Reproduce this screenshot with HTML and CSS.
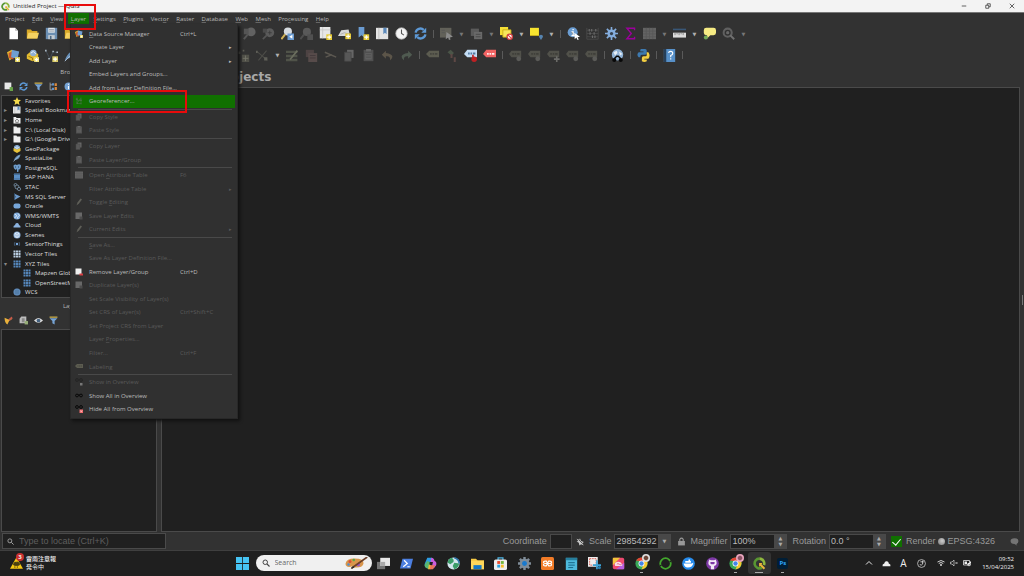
FILE: index.html
```html
<!DOCTYPE html>
<html lang="en">
<head>
<meta charset="utf-8">
<title>Untitled Project — QGIS</title>
<link rel="stylesheet" href="styles.css">
</head>
<body>
<svg class="sprite" aria-hidden="true">
  <symbol id="qgis" viewBox="0 0 16 16"><path d="M8 2a6 6 0 1 0 3 11.200" fill="none" stroke="#589632" stroke-width="3.200"/><path d="M8 2a6 6 0 0 1 5.500 8" fill="none" stroke="#8fb83e" stroke-width="3.200"/><path d="M7.500 7.500h4l-1 1.500 4.500 4.500-1.800 1.800L9 11l-1.500 1z" fill="#e8b53a"/></symbol>
  <symbol id="file" viewBox="0 0 16 16"><path d="M3 1h7l3.500 3.500V15H3z" fill="#fff"/><path d="M10 1v3.500h3.500z" fill="#bbb"/></symbol>
  <symbol id="folder" viewBox="0 0 16 16"><path d="M1 3h5l1.500 2H14v9H1z" fill="#d9a928"/><path d="M3 7h13l-2 7H1z" fill="#f5d262"/></symbol>
  <symbol id="save" viewBox="0 0 16 16"><path d="M1 1h14v14H1z" fill="#6b8fb3"/><path d="M4 1h8v6H4z" fill="#dfe5ea"/><path d="M4 10h8v5H4z" fill="#c3cbd2"/><path d="M5 3h6M5 5h6" stroke="#8b98a5"/><path d="M6 11h2v4H6z" fill="#4c6885"/></symbol>
  <symbol id="sources" viewBox="0 0 16 16"><path d="M0 4l6-3 3 9-6 4z" fill="#e7b62e"/><path d="M2 5l6-3v11l-6-2z" fill="#c85b2f"/><path d="M6 1l9 2-2 9-8-2z" fill="#6f9fd3"/><path d="M10 10h6v6h-6z" fill="#e9d862"/><path d="M13 11v4M11 13h4" stroke="#fff" stroke-width="1.400"/></symbol>
  <symbol id="geopkg-new" viewBox="0 0 16 16"><path d="M1 7l6-5 8 4v7l-7 2-7-3z" fill="#e5bd31"/><circle cx="9" cy="5" r="4" fill="#8fb0d5"/><path d="M6 5l3-2 3 3" stroke="#fff" fill="none"/><path d="M3 9l5 2v3" fill="none" stroke="#8d6d10"/><path d="M10 10h6v6h-6z" fill="#f1e27b"/><path d="M13 11v4M11 13h4" stroke="#fff" stroke-width="1.400"/></symbol>
  <symbol id="shape-new" viewBox="0 0 16 16"><path d="M1 2l5 10 4-9 5 2" fill="none" stroke="#47515c"/><path d="M0 1h2v2H0zM9 2h2v2H9zM14 3h2v2h-2zM4 11h2v2H4z" fill="#a9b8c4"/><path d="M9 9h7v7H9z" fill="#dacb68"/><path d="M12.500 10v5M10 12.500h5" stroke="#fff" stroke-width="1.400"/></symbol>
  <symbol id="feather" viewBox="0 0 16 16"><path d="M1 15C3 7 8 2 15 1c-1 7-5 10-11 11z" fill="#6b94bd"/><path d="M1 15L12 4" stroke="#b6cbe0"/></symbol>
  <symbol id="zoomd" viewBox="0 0 16 16"><circle cx="10" cy="6" r="5.500" fill="#626262"/><path d="M6 9l-5 6" stroke="#565656" stroke-width="2.400"/><path d="M1 2h6v7H1z" fill="#555"/></symbol>
  <symbol id="zoomd2" viewBox="0 0 16 16"><circle cx="9.500" cy="7" r="5.500" fill="#5b5b5b"/><path d="M6 10l-5 5" stroke="#555" stroke-width="2"/><path d="M7 7h5M9.500 4.500v5" stroke="#3b3b3b"/><path d="M1 2h5v5H1z" fill="#4b4b4b"/></symbol>
  <symbol id="zoomlast" viewBox="0 0 16 16"><circle cx="8.500" cy="5.500" r="5" fill="#d6dbe0"/><path d="M5 9l-4.500 6" stroke="#d3b458" stroke-width="2.400"/><path d="M8 8h8v8H8z" fill="#6a9bd1"/><path d="M14 9.500L10 12l4 2.500z" fill="#fff"/></symbol>
  <symbol id="zoomnext" viewBox="0 0 16 16"><circle cx="8.500" cy="6" r="5" fill="#595959"/><path d="M5 9l-4.500 6" stroke="#4d4d4d" stroke-width="2.400"/><path d="M9 9h7v7H9z" fill="#505050"/></symbol>
  <symbol id="layout" viewBox="0 0 16 16"><path d="M1 0h13v14H1z" fill="#e7e7e7"/><path d="M1 3.500h13M4.500 0v14" stroke="#c6c6c6"/><path d="M9 9h7v7H9z" fill="#e6cb35"/><path d="M12.500 10v5M10 12.500h5" stroke="#fff" stroke-width="1.400"/></symbol>
  <symbol id="view3d" viewBox="0 0 16 16"><path d="M0 11l4-7 9-1 2 8z" fill="#d8d8d8"/><path d="M3 9l5-2 6 2" stroke="#aaa" fill="none"/><path d="M9 8h7v7H9z" fill="#e6cb35"/><path d="M12.500 9v5M10 11.500h5" stroke="#fff" stroke-width="1.400"/></symbol>
  <symbol id="bookmarknew" viewBox="0 0 16 16"><path d="M2 0h7v13l-3.500-3L2 13z" fill="#6a9bd1"/><path d="M8 9h7v7H8z" fill="#e6cb35"/><path d="M11.500 10v5M9 12.500h5" stroke="#fff" stroke-width="1.400"/></symbol>
  <symbol id="bookmarks" viewBox="0 0 16 16"><path d="M0 1h15v14H0z" fill="#e4e4e4"/><path d="M3.500 1v14" stroke="#bbb"/><path d="M9 1h4v8l-2-2-2 2z" fill="#5c8abc"/></symbol>
  <symbol id="clock" viewBox="0 0 16 16"><circle cx="8" cy="8" r="7" fill="#f4f4f4" stroke="#b9b9b9"/><path d="M8 3v5l3 2" fill="none" stroke="#555" stroke-width="1.300"/></symbol>
  <symbol id="refresh" viewBox="0 0 16 16"><path d="M2 7a6 6 0 0 1 10-3.500M14 9a6 6 0 0 1-10 3.500" fill="none" stroke="#5d99d6" stroke-width="2.800"/><path d="M15 1v6H9zM1 15V9h6z" fill="#5d99d6"/></symbol>
  <symbol id="selectd" viewBox="0 0 16 16"><path d="M0 1h14v12H0z" fill="#626159"/><path d="M2 4h4M2 7h4" stroke="#555"/><path d="M8 6l8 6-4 .5 1 3-2 .5-1-3-3 2z" fill="#8b8b8b"/></symbol>
  <symbol id="stackd" viewBox="0 0 16 16"><path d="M1 2h10v9H1z" fill="#5b5b5b"/><path d="M5 6h10v9H5z" fill="#696969"/><path d="M7 9h6M7 12h6" stroke="#444"/></symbol>
  <symbol id="deselect" viewBox="0 0 16 16"><path d="M0 0h10v10H0z" fill="#f6df34"/><path d="M3.500 3.500h10v9h-10z" fill="#f9e85b" stroke="#c4a815"/><circle cx="12" cy="12" r="3.300" fill="#fff" stroke="#d33f42" stroke-width="1.600"/><path d="M10 10l4 4" stroke="#d33f42" stroke-width="1.400"/></symbol>
  <symbol id="selloc" viewBox="0 0 16 16"><path d="M0 1h11v10H0z" fill="#f8e42f"/><path d="M0 10.500h11" stroke="#b8a11b"/><path d="M13.500 16l-2.500-4a2.500 2.500 0 1 1 5 0z" fill="#5683ae"/></symbol>
  <symbol id="identify" viewBox="0 0 16 16"><circle cx="7" cy="6.500" r="6.200" fill="#6b9dd2"/><path d="M7.500 2.500v1.500M5.500 6h2v4M5.500 10.500h4" stroke="#fff" stroke-width="1.600"/><path d="M9 7l7 5-3 .5 1.500 3-1.500.5-1.500-3-2 2z" fill="#fff"/></symbol>
  <symbol id="abacus" viewBox="0 0 16 16"><path d="M1 1v14M15 1v14M1 4h14M1 8h14M1 12h14M1 15h14" stroke="#4c4c4c"/><path d="M4 2.500v3M7 2.500v3M10 6.500v3M5 6.500v3M8 10.500v3M11 10.500v3M12 2.500v3" stroke="#6c6c6c" stroke-width="1.400"/></symbol>
  <symbol id="gear" viewBox="0 0 16 16"><path d="M8 0v16M0 8h16M2.300 2.300l11.400 11.400M13.700 2.300L2.300 13.700" stroke="#84addd" stroke-width="2"/><circle cx="8" cy="8" r="5" fill="#84addd"/><circle cx="8" cy="8" r="2" fill="#34404e"/></symbol>
  <symbol id="sigma" viewBox="0 0 16 16"><path d="M13 4V1.500H3.500L9 8l-5.500 6.500H13V12" fill="none" stroke="#9b009b" stroke-width="1.700"/></symbol>
  <symbol id="tabled" viewBox="0 0 16 16"><path d="M0 1h16v14H0z" fill="#636363"/><path d="M0 5h16M0 8.500h16M0 12h16M4 1v14M8 1v14M12 1v14" stroke="#585858"/></symbol>
  <symbol id="ruler" viewBox="0 0 16 16"><path d="M0 3h16" stroke="#395777" stroke-width="2"/><path d="M0 7h16v6H0z" fill="#dcdcdc"/><path d="M2.500 7v3M5 7v2M7.500 7v3M10 7v2M12.500 7v3" stroke="#777"/></symbol>
  <symbol id="tip" viewBox="0 0 16 16"><path d="M4 1h9q3 0 3 3v3q0 3-3 3H9l-4 4v-4H4Q1 10 1 7V4q0-3 3-3z" fill="#f6eb83"/><circle cx="3.500" cy="13" r="2.500" fill="#72aa57"/></symbol>
  <symbol id="runact" viewBox="0 0 16 16"><circle cx="7" cy="7" r="5" fill="none" stroke="#606060" stroke-width="2.500"/><circle cx="7" cy="7" r="2" fill="#686868"/><path d="M10 10l5 5" stroke="#707070" stroke-width="2.400" fill="none"/></symbol>
  <symbol id="pencild" viewBox="0 0 16 16"><path d="M3 15l2-6 6-8 3 2-6 8z" fill="#5f5f58"/></symbol>
  <symbol id="noded" viewBox="0 0 16 16"><path d="M1 3h3v3H1zM7 1h2v2H7z" fill="#5d5d55"/><path d="M6 7h9v9H6z" fill="#515149"/><path d="M10.500 8v7M7 11.500h7" stroke="#77776b"/></symbol>
  <symbol id="vertexd" viewBox="0 0 16 16"><path d="M1 3l13 11M13 2L3 14" stroke="#4d4d48" stroke-width="1.300"/><path d="M0 2h2v3H0zM10 10h4v4h-4z" fill="#5e5e57"/></symbol>
  <symbol id="attrd" viewBox="0 0 16 16"><path d="M0 2h14v3H0zM0 7h14v3H0zM0 12h14v3H0z" fill="#505349"/><path d="M5 13L14 2" stroke="#6c6f5f" stroke-width="2"/></symbol>
  <symbol id="deld" viewBox="0 0 16 16"><path d="M1 1h10v9H1z" fill="#4d4343"/><path d="M4 5h11v11H4z" fill="#574b4a"/><path d="M6 8h7M6 11h7" stroke="#41383a"/></symbol>
  <symbol id="cutd" viewBox="0 0 16 16"><path d="M1 4l14 6M2 10l8-3" stroke="#5c5851" stroke-width="1.800"/></symbol>
  <symbol id="copyd" viewBox="0 0 16 16"><path d="M5 1h8v10H5z" fill="#666"/><path d="M2 4h8v11H2z" fill="#585858" stroke="#484848"/></symbol>
  <symbol id="pasted" viewBox="0 0 16 16"><path d="M2 1h12v14H2z" fill="#505050"/><path d="M5 0h6v3H5z" fill="#666"/><path d="M4 5h8v8H4z" fill="#606060"/><path d="M5 7h6M5 10h6" stroke="#4c4c4c"/></symbol>
  <symbol id="undod" viewBox="0 0 16 16"><path d="M6 2L1 7l5 5V9q6-1 5 5 8-7-5-9z" fill="#5c5549"/></symbol>
  <symbol id="redod" viewBox="0 0 16 16"><path d="M10 2l5 5-5 5V9q-6-1-5 5-8-7 5-9z" fill="#4f5a50"/></symbol>
  <symbol id="tagd" viewBox="0 0 16 16"><path d="M0 6l4-4h12v8H4z" fill="#5c5c50"/><path d="M5 6h2M8 6h2M11 6h3" stroke="#45453f" stroke-width="2"/></symbol>
  <symbol id="tagd2" viewBox="0 0 16 16"><path d="M0 6l3-4h12v8H3z" fill="#51514a"/><path d="M4 6h2M7 6h2M10 6h3" stroke="#3f3f3a" stroke-width="2"/><circle cx="12" cy="12" r="3" fill="#5b5b58"/></symbol>
  <symbol id="tagd3" viewBox="0 0 16 16"><path d="M0 6l3-4h12v8H3z" fill="#51514a"/><path d="M4 6h2M7 6h2M10 6h3" stroke="#3f3f3a" stroke-width="2"/><path d="M12 9v7M8.500 12.500h7" stroke="#6b6b68" stroke-width="2"/></symbol>
  <symbol id="diagd" viewBox="0 0 16 16"><path d="M3 4l4-3 4 4-3 3z" fill="#4b5548"/><path d="M8 6v5M12 10v6" stroke="#5e4845" stroke-width="2.500"/></symbol>
  <symbol id="tagblue" viewBox="0 0 16 16"><path d="M0 6l4-5h12v9H4z" fill="#c4ddf5"/><path d="M5 5.500h2M8 5.500h2M11 5.500h3" stroke="#527ba3" stroke-width="2.400"/><circle cx="12.500" cy="12.500" r="3.400" fill="#bd2023"/><path d="M11 10V7" stroke="#bd2023" stroke-width="2"/></symbol>
  <symbol id="tagred" viewBox="0 0 16 16"><path d="M0 6l4-5h12v9H4z" fill="#f26464"/><path d="M5 6h2M8 6h2M11 6h3" stroke="#fff0f0" stroke-width="2.400"/></symbol>
  <symbol id="metasearch" viewBox="0 0 16 16"><circle cx="8" cy="7" r="7" fill="#91b3d6"/><path d="M3 4l4-2 1 3-3 3zM10 3l4 3-3 2z" fill="#e7eff7"/><path d="M4 12l3-3h2l3 3" fill="none" stroke="#050505" stroke-width="1.800"/><circle cx="4" cy="13.500" r="2.500" fill="#080808"/><circle cx="12" cy="13.500" r="2.500" fill="#080808"/></symbol>
  <symbol id="python" viewBox="0 0 16 16"><path d="M5 0h5q2 0 2 2v3q0 2-2 2H6q-2 0-2 3H2Q-1 7 2 4h6V3H4V1z" fill="#3e7ab0"/><path d="M12 4h2q3 4 0 8H9v1h3v2q-3 2-6 0v-4q0-2 2-2h3q1 0 1-2z" fill="#f4cf42"/></symbol>
  <symbol id="help" viewBox="0 0 16 16"><path d="M1 0h14v16H1z" fill="#5790c8"/><path d="M1 0h3v16H1z" fill="#263f59"/><path d="M7 5q0-2 2.500-2T12 5.500Q12 7 9.500 8v2M9.500 11.500V13" stroke="#fff" fill="none" stroke-width="1.400"/></symbol>
  <symbol id="addlayer" viewBox="0 0 16 16"><path d="M1 1h12v12H1z" fill="#e7e7e7"/><path d="M10 9h6v7h-6z" fill="#67a247"/></symbol>
  <symbol id="funnel" viewBox="0 0 16 16"><path d="M1 1h14v2H1z" fill="#e2c14e"/><path d="M1 4h14l-5 5v6l-4-2V9z" fill="#76a3d4"/></symbol>
  <symbol id="collapse" viewBox="0 0 16 16"><path d="M2 1v13h4M2 5h4" stroke="#aaa" fill="none" stroke-width="1.500"/><path d="M5 2h4v4H5zM5 10h4v4H5z" fill="#5f94ce"/><path d="M10 2h4v5h-4zM10 9h4v5h-4z" fill="#dc8a3c"/></symbol>
  <symbol id="info" viewBox="0 0 16 16"><circle cx="8" cy="8" r="7" fill="#76a3d4"/><path d="M8 3v2M8 7v6" stroke="#fff" stroke-width="2"/></symbol>
  <symbol id="star" viewBox="0 0 16 16"><path d="M8 0l2.300 5.500 5.700.5-4.300 4L13 16l-5-3.200L3 16l1.300-6L0 6l5.700-.5z" fill="#f4da4c"/></symbol>
  <symbol id="home" viewBox="0 0 16 16"><path d="M1 2h5l1 2h8v11H1z" fill="#eee"/><path d="M4 10l4-4 4 4M5.500 9v4h5V9" stroke="#666" stroke-width="1.400" fill="none"/></symbol>
  <symbol id="drive" viewBox="0 0 16 16"><path d="M1 1h6l1 2h7v12H1z" fill="#eee"/></symbol>
  <symbol id="geopkg" viewBox="0 0 16 16"><circle cx="8" cy="6" r="6" fill="#7aa5d3"/><path d="M1 6l7 3 7-3v6l-7 4-7-4z" fill="#e8c33a"/><path d="M8 1v6M3 4l5 3 5-3" stroke="#f3f3f3" stroke-width="1.500" fill="none"/></symbol>
  <symbol id="elephant" viewBox="0 0 16 16"><path d="M1 3q3-3 7-1 5-3 8 1 0 5-3 8h-2v4q-2 2-3 0V9L6 12Q1 10 1 3z" fill="#6e9ccb"/><path d="M5 4v4M11 4v4" stroke="#2d4256"/></symbol>
  <symbol id="hana" viewBox="0 0 16 16"><path d="M2 1h12v13H2z" fill="#5b8fc5"/><path d="M0 3h16M0 12h16" stroke="#354f6a"/></symbol>
  <symbol id="stac" viewBox="0 0 16 16"><g fill="#222" stroke="#7f99b2" stroke-width="1.500"><circle cx="5" cy="4" r="3"/><circle cx="8" cy="8" r="4"/><circle cx="12" cy="12" r="3.200"/></g></symbol>
  <symbol id="mssql" viewBox="0 0 16 16"><path d="M2 1l13 6-12 7 2-7z" fill="#6b99cb"/><path d="M3 1v13" stroke="#375472" stroke-width="2"/></symbol>
  <symbol id="oracle" viewBox="0 0 16 16"><rect x="1" y="3" width="14" height="10" rx="4" fill="#77a6d8"/></symbol>
  <symbol id="globe" viewBox="0 0 16 16"><circle cx="8" cy="8" r="7" fill="#7ba8d9"/><path d="M3 4l4 2-1 4-3 1M10 3l3 4-4 3 1 4" stroke="#e6effa" stroke-width="1.600" fill="none"/></symbol>
  <symbol id="wcs" viewBox="0 0 16 16"><circle cx="8" cy="8" r="7" fill="#6b98c9"/><path d="M1 6h14M1 10h14M6 1v14M10 1v14" stroke="#3b5c80"/></symbol>
  <symbol id="cloud" viewBox="0 0 16 16"><path d="M1 13q-1-4 3-5 1-5 5-4 3 1 3 4 4 1 3 5z" fill="#8cb3df"/></symbol>
  <symbol id="cube" viewBox="0 0 16 16"><circle cx="8" cy="8" r="7" fill="#8bb1dc"/><path d="M4 5l4 2 4-2M8 7v6M4 5v6l4 2 4-2V5L8 3z" stroke="#fff" fill="none" stroke-width="1.300"/></symbol>
  <symbol id="sensor" viewBox="0 0 16 16"><circle cx="8" cy="8" r="2.500" fill="#76a6dc"/><path d="M4 4q-3 4 0 8M12 4q3 4 0 8" stroke="#4e6b8a" fill="none" stroke-width="1.500"/></symbol>
  <symbol id="grid" viewBox="0 0 16 16"><path d="M1 1h4v4H1zM6 1h4v4H6zM11 1h4v4h-4zM1 6h4v4H1zM6 6h4v4H6zM11 6h4v4h-4zM1 11h4v4H1zM6 11h4v4H6zM11 11h4v4h-4z" fill="currentColor"/></symbol>
  <symbol id="brush" viewBox="0 0 16 16"><path d="M1 3l7 3 5-4 2 3-6 4-3 6q-5-3-5-12z" fill="#e8b13b"/><path d="M8 6l6-5 1 3-5 5z" fill="#c6564b"/></symbol>
  <symbol id="addgroup" viewBox="0 0 16 16"><path d="M4 1h9v12H1V5z" fill="#bcbcbc"/><path d="M5 4h5v7H5z" fill="#888"/><path d="M10 9h6v6h-6z" fill="#96ad78"/></symbol>
  <symbol id="eye" viewBox="0 0 16 16"><path d="M0 8q8-9 16 0-8 8-16 0z" fill="#ddd"/><circle cx="8" cy="8" r="3.300" fill="#456280"/></symbol>
  <symbol id="georef" viewBox="0 0 16 16"><path d="M1 4h4v3h9M4 1v12h9M12 1v14M5 11l6-8" fill="none" stroke="#487347" stroke-width="1.300"/><path d="M2 3h3v3H2zM10 5h3v3h-3zM3 11h3v3H3z" fill="#47753f"/></symbol>
  <symbol id="remove" viewBox="0 0 16 16"><path d="M1 1h12v12H1z" fill="#eee"/><path d="M9 11h7v4H9z" fill="#d53d43"/></symbol>
  <symbol id="dupd" viewBox="0 0 16 16"><path d="M1 1h13v13H1z" fill="#686868"/><path d="M9 9h6v6H9z" fill="#4c4c4c"/></symbol>
  <symbol id="glasses" viewBox="0 0 16 16"><g fill="none" stroke="#080808" stroke-width="2"><circle cx="4" cy="7" r="2.800"/><circle cx="12" cy="7" r="2.800"/><path d="M6 6h4"/></g></symbol>
  <symbol id="glassesred" viewBox="0 0 16 16"><g fill="none" stroke="#080808" stroke-width="2"><circle cx="4" cy="4" r="2.800"/><circle cx="12" cy="4" r="2.800"/></g><path d="M9 9h7v7H9z" fill="#ef6a6d"/><path d="M11 11l3 3M14 11l-3 3" stroke="#ffe0e0"/></symbol>
  <symbol id="glassesd" viewBox="0 0 16 16"><g fill="none" stroke="#202020" stroke-width="1.400"><circle cx="4" cy="4" r="2.800"/><circle cx="12" cy="4" r="2.800"/></g><path d="M10 10h5v5h-5z" fill="#777"/></symbol>
  <symbol id="lens" viewBox="0 0 16 16"><circle cx="6.500" cy="6.500" r="4.500" fill="none" stroke="currentColor" stroke-width="2"/><path d="M10 10l5 5" stroke="currentColor" stroke-width="2.200"/></symbol>
  <symbol id="lock" viewBox="0 0 16 16"><path d="M5 8V4q3-4 6 0v4" fill="none" stroke="#999" stroke-width="2"/><path d="M2 7h12v8H2z" fill="#999"/></symbol>
  <symbol id="extent" viewBox="0 0 16 16"><path d="M1 3l5 2 1-3 2 5 5 2-3 2 3 4-5-2-3 2-1-5-4-2 3-1z" fill="#c8c8c8"/><path d="M5 5l6 6" stroke="#444" stroke-width="1.500"/></symbol>
  <symbol id="bubble" viewBox="0 0 16 16"><path d="M8 2q7 0 7 5t-4 5.500l2 3-5-3Q1 12 1 7t7-5z" fill="#747474"/></symbol>
  <symbol id="weather" viewBox="0 0 16 16"><path d="M8 1l8 14H0z" fill="#f5c912"/><path d="M4 10q1-4 4-3 4-1 4 3l-2 1H6zM6 12v2M9 12v2" fill="#4b4110" stroke="#4b4110"/></symbol>
  <symbol id="windows" viewBox="0 0 16 16"><path d="M0 0h7.500v7.500H0zM8.500 0H16v7.500H8.500zM0 8.500h7.500V16H0zM8.500 8.500H16V16H8.500z" fill="#46c4f4"/></symbol>
  <symbol id="palette" viewBox="0 0 32 16"><path d="M2 9Q3 2 14 2q13 0 12 7-2 6-12 5-2-3-5-1-7 1-7-4z" fill="#d9964b"/><circle cx="8" cy="6" r="2" fill="#d94e38"/><circle cx="13" cy="4" r="1.700" fill="#58a84c"/><circle cx="19" cy="10" r="2.500" fill="#9b59c4"/><circle cx="6" cy="10" r="1.600" fill="#4f8fd1"/><path d="M10 15L31 0" stroke="#6c4029" stroke-width="2.200"/><path d="M9 16l5-2-2-2z" fill="#2c2c2c"/></symbol>
  <symbol id="taskview" viewBox="0 0 16 16"><path d="M0 6h10v9H0z" fill="#747474"/><path d="M4 1h12v10H4z" fill="#e7e7e7"/><path d="M4 6h6v5H4z" fill="#aaa"/></symbol>
  <symbol id="powershell" viewBox="0 0 16 16"><path d="M3 2h13l-3 12H0z" fill="#4c7fe0"/><path d="M5 4l4 4-5 4M9 12h3" fill="none" stroke="#fff" stroke-width="1.500"/></symbol>
  <symbol id="copilot" viewBox="0 0 16 16"><path d="M4 1h6l2 5H6l-2 7Q0 13 1 8z" fill="#2c9de3"/><path d="M1 9l3-4 3 1-1 9-2-1Q0 13 1 9z" fill="#58b872"/><path d="M6 9l4 2-2 4H5z" fill="#eeb83c"/><path d="M9 1q3 0 4 4 3 1 2 5-2 4-6 5l2-9H8z" fill="#c95ddd"/><path d="M8 10h6l-3 5H7z" fill="#e97458"/></symbol>
  <symbol id="earth" viewBox="0 0 16 16"><circle cx="8" cy="8" r="7.500" fill="#d4e6ee"/><path d="M5 1q4 1 3 5l-4 3-3-2q0-4 4-6zM9 7l6 1q-1 6-6 7l-2-4z" fill="#3b9d69"/><path d="M9 1q6 2 6 7" fill="none" stroke="#2d75aa" stroke-width="2"/></symbol>
  <symbol id="explorer" viewBox="0 0 16 16"><path d="M0 2h6l2 2h8v11H0z" fill="#f7ca45"/><path d="M0 5h16v10H0z" fill="#ffd75a"/><path d="M3 10h10v5H3z" fill="#1577c5"/></symbol>
  <symbol id="store" viewBox="0 0 16 16"><path d="M5 4V1h6v3" fill="none" stroke="#4db4e4" stroke-width="1.500"/><rect y="3" width="16" height="13" rx="2" fill="#eee"/><path d="M4 5h3.500v3.500H4z" fill="#ec4b2b"/><path d="M8.500 5H12v3.500H8.500z" fill="#72b63a"/><path d="M4 9.500h3.500V13H4z" fill="#28a1df"/><path d="M8.500 9.500H12V13H8.500z" fill="#f5bb28"/></symbol>
  <symbol id="settings" viewBox="0 0 16 16"><path d="M8 0v16M0 8h16M2.300 2.300l11.400 11.400M13.700 2.300L2.300 13.700" stroke="#7f8c98" stroke-width="3"/><circle cx="8" cy="8" r="6" fill="#7f8c98"/><circle cx="8" cy="8" r="3" fill="#1779cf"/></symbol>
  <symbol id="xampp" viewBox="0 0 16 16"><rect width="16" height="16" rx="2" fill="#f27b27"/><path d="M5 5h1.500l3 6H11q2 0 2-1.500T11 8H5Q3 8 3 6.500T5 5zM11 5H9.500l-3 6H5q-2 0-2-1.500T5 8h6q2 0 2-1.500T11 5z" stroke="#fff" stroke-width="1.500" fill="none"/></symbol>
  <symbol id="notepad" viewBox="0 0 16 16"><path d="M1 1h14v15H1z" fill="#4eb9db"/><path d="M1 1h14v3H1z" fill="#277f9d"/><path d="M4 7h8M4 10h8M4 13h6" stroke="#176585" stroke-width="1.200"/></symbol>
  <symbol id="snip" viewBox="0 0 16 16"><path d="M0 0h12v12H0z" fill="#eee"/><path d="M2 2h8v8H2z" fill="none" stroke="#d74d42" stroke-dasharray="2 1"/><path d="M11 4v11M6 10h10" stroke="#3ba4d8" stroke-width="2"/><circle cx="14" cy="13" r="2" fill="#297eae"/></symbol>
  <symbol id="creative" viewBox="0 0 16 16"><rect x="1" y="1" width="14" height="14" rx="2" fill="#ee4a70"/><path d="M1 1h9L1 10z" fill="#f2c43c"/><path d="M15 7v8H5z" fill="#b95ddd"/><path d="M4 11q-2-4 2-5 4-1 6 2 2 3-1 3H5" fill="#f7dfe8"/><path d="M6 9q1-2 3 0t3-1" fill="none" stroke="#e54b72"/></symbol>
  <symbol id="chrome" viewBox="0 0 16 16"><circle cx="8" cy="8" r="7.500" fill="#39a657"/><path d="M1.500 4.500A7.500 7.500 0 0 1 15 5H8z" fill="#e34334"/><path d="M15 5q2 8-7 10.500L11 8 8 5z" fill="#f7c72f"/><circle cx="8" cy="8" r="3.600" fill="#fff"/><circle cx="8" cy="8" r="2.700" fill="#4285e8"/></symbol>
  <symbol id="ring" viewBox="0 0 16 16"><circle cx="8" cy="8" r="6.500" fill="none" stroke="#43a62d" stroke-width="2.200"/><path d="M1 11l2-1M13 6l2-1" stroke="#1f1f1f" stroke-width="1.500"/></symbol>
  <symbol id="docker" viewBox="0 0 16 16"><circle cx="8" cy="8" r="7.800" fill="#278cec"/><path d="M2 8h10l2-1q-1 6-7 6-4 0-5-5zM4 5h7v2H4zM8 3h2v2H8z" fill="#fff"/></symbol>
  <symbol id="github" viewBox="0 0 16 16"><circle cx="8" cy="8" r="7.800" fill="#7d39a5"/><path d="M4 3l2 1h4l2-1q3 7-2 8v4H6v-4Q1 10 4 3z" fill="#f2e9f6"/><path d="M5.500 6h5q1 3-2.500 3T5.500 6z" fill="#7d39a5"/></symbol>
  <symbol id="up" viewBox="0 0 16 16"><path d="M2 11l6-6 6 6" fill="none" stroke="#eee" stroke-width="1.900"/></symbol>
  <symbol id="traycloud" viewBox="0 0 16 16"><path d="M1 13q-1-4 3-5 1-5 5-4 3 1 3 4 4 1 3 5z" fill="#eee"/></symbol>
  <symbol id="ime" viewBox="0 0 16 16"><circle cx="8" cy="8" r="7" fill="none" stroke="#ddd" stroke-width="1.300"/><path d="M10 3v6q-2 3-5 1M6 5h6" fill="none" stroke="#ddd" stroke-width="1.500"/></symbol>
  <symbol id="wifi" viewBox="0 0 16 16"><path d="M1 6q7-6 14 0M3.500 9q4.500-4 9 0" fill="none" stroke="#eee" stroke-width="1.700"/><circle cx="8" cy="12" r="1.800" fill="#eee"/></symbol>
  <symbol id="mute" viewBox="0 0 16 16"><path d="M1 6h3l4-4v12l-4-4H1zM11 6l4 4M15 6l-4 4" fill="none" stroke="#ddd" stroke-width="1.300"/></symbol>
  <symbol id="battery" viewBox="0 0 16 16"><path d="M1 3h12v9H1z" fill="none" stroke="#eee" stroke-width="1.500"/><path d="M3 5h5v5H3zM14 5h2v4h-2z" fill="#eee"/><circle cx="12" cy="11" r="3.500" fill="#eee"/><path d="M10 11l2 2 2-3" stroke="#333" fill="none"/></symbol>
</svg>

<header class="titlebar">
  <svg class="title-logo"><use href="#qgis"/></svg>
  <span class="title">Untitled Project — QGIS</span>
  <div class="window-controls">
    <button aria-label="Minimize"><svg viewBox="0 0 8 8"><path d="M1 4h6" stroke="#333"/></svg></button>
    <button aria-label="Restore"><svg viewBox="0 0 8 8"><path d="M1 3h4v4H1zM3 3V1h4v4H5" fill="none" stroke="#333"/></svg></button>
    <button aria-label="Close"><svg viewBox="0 0 8 8"><path d="M1 1l6 6M7 1L1 7" stroke="#333"/></svg></button>
  </div>
</header>

<nav class="menubar">
  <div class="menus">
    <button>Pro<u>j</u>ect</button><button><u>E</u>dit</button><button><u>V</u>iew</button><button class="open"><u>L</u>ayer</button><button><u>S</u>ettings</button><button><u>P</u>lugins</button><button>Vect<u>o</u>r</button><button><u>R</u>aster</button><button><u>D</u>atabase</button><button><u>W</u>eb</button><button><u>M</u>esh</button><button>Pro<u>c</u>essing</button><button><u>H</u>elp</button>
  </div>
</nav>

<div class="toolbar">
  <button aria-label="New"><svg><use href="#file"/></svg></button>
  <button aria-label="Open"><svg><use href="#folder"/></svg></button>
  <button aria-label="Save"><svg><use href="#save"/></svg></button>
  <button aria-label="Layout manager"><svg><use href="#folder"/></svg></button>
  <span class="covered"></span>
  <button aria-label="Zoom to selection"><svg><use href="#zoomd"/></svg></button>
  <button aria-label="Zoom to layer"><svg><use href="#zoomd2"/></svg></button>
  <button aria-label="Zoom last"><svg><use href="#zoomlast"/></svg></button>
  <button aria-label="Zoom next"><svg><use href="#zoomnext"/></svg></button>
  <button aria-label="New map view"><svg><use href="#layout"/></svg></button>
  <button aria-label="New 3D map view"><svg><use href="#view3d"/></svg></button>
  <button aria-label="New bookmark"><svg><use href="#bookmarknew"/></svg></button>
  <button aria-label="Show bookmarks"><svg><use href="#bookmarks"/></svg></button>
  <button aria-label="Temporal controller"><svg><use href="#clock"/></svg></button>
  <button aria-label="Refresh"><svg><use href="#refresh"/></svg></button>
  <span class="sep"></span>
  <button aria-label="Select features"><svg><use href="#selectd"/></svg></button><button class="drop dim" aria-label="Select options">▼</button>
  <button aria-label="Select by value"><svg><use href="#stackd"/></svg></button><button class="drop dim" aria-label="Value options">▼</button>
  <button aria-label="Deselect"><svg><use href="#deselect"/></svg></button><button class="drop" aria-label="Deselect options">▼</button>
  <button aria-label="Select by location"><svg><use href="#selloc"/></svg></button><button class="drop" aria-label="Location options">▼</button>
  <span class="sep"></span>
  <button aria-label="Identify"><svg><use href="#identify"/></svg></button>
  <button aria-label="Field calculator"><svg><use href="#abacus"/></svg></button>
  <button aria-label="Toolbox"><svg><use href="#gear"/></svg></button>
  <button aria-label="Statistics"><svg><use href="#sigma"/></svg></button>
  <button aria-label="Attribute table"><svg><use href="#tabled"/></svg></button><button class="drop dim" aria-label="Table options">▼</button>
  <button aria-label="Measure"><svg><use href="#ruler"/></svg></button><button class="drop" aria-label="Measure options">▼</button>
  <button aria-label="Map tips"><svg><use href="#tip"/></svg></button>
  <button aria-label="Run action"><svg><use href="#runact"/></svg></button><button class="drop dim" aria-label="Action options">▼</button>
</div>

<div class="toolbar second">
  <button aria-label="Data source manager"><svg><use href="#sources"/></svg></button>
  <button aria-label="New GeoPackage layer"><svg><use href="#geopkg-new"/></svg></button>
  <button aria-label="New shapefile layer"><svg><use href="#shape-new"/></svg></button>
  <button aria-label="New SpatiaLite layer"><svg><use href="#feather"/></svg></button>
  <span class="covered"></span>
  <button aria-label="Add feature"><svg><use href="#noded"/></svg></button>
  <button aria-label="Vertex tool"><svg><use href="#vertexd"/></svg></button><button class="drop" aria-label="Vertex options">▼</button>
  <button aria-label="Modify attributes"><svg><use href="#attrd"/></svg></button>
  <button aria-label="Delete selected"><svg><use href="#deld"/></svg></button>
  <button aria-label="Cut"><svg><use href="#cutd"/></svg></button>
  <button aria-label="Copy"><svg><use href="#copyd"/></svg></button>
  <button aria-label="Paste"><svg><use href="#pasted"/></svg></button>
  <button aria-label="Undo"><svg><use href="#undod"/></svg></button>
  <button aria-label="Redo"><svg><use href="#redod"/></svg></button>
  <span class="sep"></span>
  <button aria-label="Label options"><svg><use href="#tagd"/></svg></button>
  <button aria-label="Diagram options"><svg><use href="#diagd"/></svg></button>
  <button aria-label="Highlight pinned labels"><svg><use href="#tagblue"/></svg></button>
  <button aria-label="Unplaced labels"><svg><use href="#tagred"/></svg></button>
  <span class="sep"></span>
  <button aria-label="Pin labels"><svg><use href="#tagd2"/></svg></button>
  <button aria-label="Show labels"><svg><use href="#tagd2"/></svg></button>
  <button aria-label="Move label"><svg><use href="#tagd3"/></svg></button>
  <button aria-label="Rotate label"><svg><use href="#tagd2"/></svg></button>
  <button aria-label="Change label"><svg><use href="#tagd2"/></svg></button>
  <span class="sep"></span>
  <button aria-label="MetaSearch"><svg><use href="#metasearch"/></svg></button>
  <span class="sep"></span>
  <button aria-label="Python console"><svg><use href="#python"/></svg></button>
  <span class="sep"></span>
  <button aria-label="Help contents"><svg><use href="#help"/></svg></button>
  <span class="sep"></span>
</div>

<main class="workspace">
  <aside class="docks">
    <h2 class="dock-title">Browser</h2>
    <div class="dock-tools">
      <button aria-label="Add layer"><svg><use href="#addlayer"/></svg></button><button aria-label="Refresh browser"><svg><use href="#refresh"/></svg></button><button aria-label="Filter browser"><svg><use href="#funnel"/></svg></button><button aria-label="Collapse all"><svg><use href="#collapse"/></svg></button><button aria-label="Properties"><svg><use href="#info"/></svg></button>
    </div>
    <ul class="tree">
      <li><i></i><svg><use href="#star"/></svg>Favorites</li>
      <li><i>▸</i><svg><use href="#bookmarks"/></svg>Spatial Bookmarks</li>
      <li><i>▸</i><svg><use href="#home"/></svg>Home</li>
      <li><i>▸</i><svg><use href="#drive"/></svg>C:\ (Local Disk)</li>
      <li><i>▸</i><svg><use href="#drive"/></svg>G:\ (Google Drive)</li>
      <li><i></i><svg><use href="#geopkg"/></svg>GeoPackage</li>
      <li><i></i><svg><use href="#feather"/></svg>SpatiaLite</li>
      <li><i></i><svg><use href="#elephant"/></svg>PostgreSQL</li>
      <li><i></i><svg><use href="#hana"/></svg>SAP HANA</li>
      <li><i></i><svg><use href="#stac"/></svg>STAC</li>
      <li><i></i><svg><use href="#mssql"/></svg>MS SQL Server</li>
      <li><i></i><svg><use href="#oracle"/></svg>Oracle</li>
      <li><i></i><svg><use href="#globe"/></svg>WMS/WMTS</li>
      <li><i></i><svg><use href="#cloud"/></svg>Cloud</li>
      <li><i></i><svg><use href="#cube"/></svg>Scenes</li>
      <li><i></i><svg><use href="#sensor"/></svg>SensorThings</li>
      <li><i></i><svg class="pale"><use href="#grid"/></svg>Vector Tiles</li>
      <li><i>▾</i><svg><use href="#grid"/></svg>XYZ Tiles</li>
      <li class="child"><i></i><svg><use href="#grid"/></svg>Mapzen Global</li>
      <li class="child"><i></i><svg><use href="#grid"/></svg>OpenStreetMap</li>
      <li><i></i><svg><use href="#wcs"/></svg>WCS</li>
    </ul>
    <h2 class="dock-title lower">Layers</h2>
    <div class="dock-tools">
      <button aria-label="Layer styling"><svg><use href="#brush"/></svg></button><button aria-label="Add group"><svg><use href="#addgroup"/></svg></button><button aria-label="Map themes"><svg><use href="#eye"/></svg></button><button aria-label="Filter legend"><svg><use href="#funnel"/></svg></button>
    </div>
    <div class="layers-box"></div>
  </aside>
  <div class="splitter"></div>
  <section class="central">
    <h1>Recent Projects</h1>
    <div class="projects"></div>
  </section>
  <div class="edge"><span></span></div>
</main>

<footer class="status">
  <label class="locator"><svg><use href="#lens"/></svg><input type="text" placeholder="Type to locate (Ctrl+K)" aria-label="Locate"></label>
  <label for="coord">Coordinate</label>
  <input id="coord" class="field coord" type="text">
  <svg class="st-icon"><use href="#extent"/></svg>
  <label for="scale">Scale</label>
  <span class="combo"><input id="scale" type="text" value="29854292"><button aria-label="Scale list">▼</button></span>
  <svg class="st-icon"><use href="#lock"/></svg>
  <label for="mag">Magnifier</label>
  <span class="combo"><input id="mag" type="text" value="100%"><span class="steps"><button aria-label="Increase magnifier">▲</button><button aria-label="Decrease magnifier">▼</button></span></span>
  <label for="rot">Rotation</label>
  <span class="combo"><input id="rot" type="text" value="0.0 °"><span class="steps"><button aria-label="Increase rotation">▲</button><button aria-label="Decrease rotation">▼</button></span></span>
  <label class="render"><input type="checkbox" checked>Render</label>
  <button class="crs"><span class="ball"></span>EPSG:4326</button>
  <button class="messages" aria-label="Messages"><svg class="st-icon"><use href="#bubble"/></svg></button>
</footer>

<div class="taskbar">
  <button class="weather"><span class="warn"><svg><use href="#weather"/></svg><b>3</b></span><span class="warn-text"><strong>雷雨注意報</strong><span>発令中</span></span></button>
  <div class="center">
    <button class="start" aria-label="Start"><svg><use href="#windows"/></svg></button>
    <label class="search"><svg><use href="#lens"/></svg><input type="text" placeholder="Search" aria-label="Search"><svg class="palette"><use href="#palette"/></svg></label>
    <div class="apps">
      <button aria-label="Task view"><svg><use href="#taskview"/></svg></button>
      <button aria-label="PowerShell"><svg><use href="#powershell"/></svg></button>
      <button aria-label="Copilot"><svg><use href="#copilot"/></svg></button>
      <button aria-label="Earth"><svg><use href="#earth"/></svg></button>
      <button aria-label="File Explorer"><svg><use href="#explorer"/></svg></button>
      <button aria-label="Store"><svg><use href="#store"/></svg></button>
      <button aria-label="Settings"><svg><use href="#settings"/></svg></button>
      <button aria-label="XAMPP"><svg><use href="#xampp"/></svg></button>
      <button aria-label="Notepad"><svg><use href="#notepad"/></svg></button>
      <button aria-label="Snipping Tool"><svg><use href="#snip"/></svg></button>
      <button aria-label="Creative Cloud"><svg><use href="#creative"/></svg></button>
      <button aria-label="Chrome" class="running"><svg><use href="#chrome"/></svg><span class="avatar"></span></button>
      <button aria-label="Ring"><svg><use href="#ring"/></svg></button>
      <button aria-label="Docker"><svg><use href="#docker"/></svg></button>
      <button aria-label="GitHub"><svg><use href="#github"/></svg></button>
      <button aria-label="Chrome, second profile" class="running"><svg><use href="#chrome"/></svg><span class="avatar pink"></span></button>
      <button aria-label="QGIS" class="running active"><svg><use href="#qgis"/></svg></button>
      <button aria-label="Photoshop" class="running"><span class="ps">Ps</span></button>
    </div>
  </div>
  <div class="tray">
    <svg><use href="#up"/></svg><svg class="wide"><use href="#traycloud"/></svg><span class="ime-a">A</span><svg class="wide"><use href="#ime"/></svg>
    <span class="system"><svg><use href="#wifi"/></svg><svg><use href="#mute"/></svg><svg><use href="#battery"/></svg></span>
    <time><span>09:52</span><span>15/04/2025</span></time>
  </div>
</div>

<div class="menu" role="menu">
  <button role="menuitem"><svg><use href="#sources"/></svg><span><u>D</u>ata Source Manager</span><kbd>Ctrl+L</kbd></button>
  <button role="menuitem"><span>Create Layer</span><em>▸</em></button>
  <button role="menuitem"><span>Add Layer</span><em>▸</em></button>
  <button role="menuitem"><span>Embed Layers and Groups...</span></button>
  <button role="menuitem"><span>Add from Layer Definition File...</span></button>
  <button role="menuitem" class="hot"><svg><use href="#georef"/></svg><span>Georeferencer...</span></button>
  <hr>
  <button role="menuitem" disabled><svg><use href="#copyd"/></svg><span>Copy Style</span></button>
  <button role="menuitem" disabled><svg><use href="#pasted"/></svg><span>Paste Style</span></button>
  <hr>
  <button role="menuitem" disabled><svg><use href="#copyd"/></svg><span>Copy Layer</span></button>
  <button role="menuitem" disabled><svg><use href="#pasted"/></svg><span>Paste Layer/Group</span></button>
  <hr>
  <button role="menuitem" disabled><svg><use href="#tabled"/></svg><span>Open <u>A</u>ttribute Table</span><kbd>F6</kbd></button>
  <button role="menuitem" disabled><span>Filter Attribute Table</span><em>▸</em></button>
  <button role="menuitem" disabled><svg><use href="#pencild"/></svg><span>Toggle <u>E</u>diting</span></button>
  <button role="menuitem" disabled><svg><use href="#dupd"/></svg><span>Save Layer Edits</span></button>
  <button role="menuitem" disabled><svg><use href="#pencild"/></svg><span>Current Edits</span><em>▸</em></button>
  <hr>
  <button role="menuitem" disabled><span><u>S</u>ave As...</span></button>
  <button role="menuitem" disabled><span>Save As Layer Definition File...</span></button>
  <button role="menuitem"><svg><use href="#remove"/></svg><span>Remove Layer/Group</span><kbd>Ctrl+D</kbd></button>
  <button role="menuitem" disabled><svg><use href="#dupd"/></svg><span>Duplicate Layer(s)</span></button>
  <button role="menuitem" disabled><span>Set Scale Visibility of Layer(s)</span></button>
  <button role="menuitem" disabled><span>Set CRS of Layer(s)</span><kbd>Ctrl+Shift+C</kbd></button>
  <button role="menuitem" disabled><span>Set Project CRS from Layer</span></button>
  <button role="menuitem" disabled><span>Layer <u>P</u>roperties...</span></button>
  <button role="menuitem" disabled><span>Filter...</span><kbd>Ctrl+F</kbd></button>
  <button role="menuitem" disabled><svg><use href="#tagd"/></svg><span>Labeling</span></button>
  <hr>
  <button role="menuitem" disabled><svg><use href="#glassesd"/></svg><span>Show in Overview</span></button>
  <button role="menuitem"><svg><use href="#glasses"/></svg><span>Show All in Overview</span></button>
  <button role="menuitem"><svg><use href="#glassesred"/></svg><span>Hide All from Overview</span></button>
</div>
<div class="mark mark-menu"></div>
<div class="mark mark-item"></div>
</body>
</html>
```
FILE: styles.css
```css
* { box-sizing: border-box; }
body {
  margin: 0;
  height: 100vh;
  display: flex;
  flex-direction: column;
  overflow: hidden;
  background: #323232;
  color: #b8b8b8;
  font: 6px/8px "Open Sans", "Noto Sans", sans-serif;
}
button, input { font: inherit; color: inherit; background: none; border: 0; padding: 0; margin: 0; min-width: 0; }
button { display: flex; align-items: center; justify-content: center; white-space: nowrap; }
svg { display: block; flex: none; }
u { text-underline-offset: 1px; text-decoration-thickness: 1px; text-decoration-color: #666; }
.sprite { display: none; }

.titlebar { flex: none; height: 12px; display: flex; align-items: center; background: #f3f3f3; color: #222; padding-left: 1px; }
.title-logo { width: 9px; height: 9px; }
.title { margin-left: 3px; }
.window-controls { margin-left: auto; display: flex; }
.window-controls button { width: 24px; height: 12px; }
.window-controls svg { width: 6px; height: 6px; }

.menubar { flex: none; height: 12px; display: flex; border-top: 1px solid #777; padding-left: 2px; }
.menus { width: 330px; display: flex; justify-content: space-between; }
.menubar button { padding: 0 3px; }
.menubar .open { background: #107000; }

.toolbar { flex: none; height: 19px; display: flex; align-items: center; padding-left: 4px; }
.toolbar.second { height: 24px; }
.toolbar button { width: 19px; height: 17px; flex: none; }
.toolbar svg { width: 13px; height: 13px; }
.toolbar .covered { width: 160px; flex: none; }
.toolbar.second .covered { width: 154px; }
.toolbar .sep { width: 1px; height: 8px; margin: 0 3px; background: #5a5a5a; flex: none; }
.toolbar .drop { width: 11px; }
.drop { font-family: "DejaVu Sans", sans-serif; font-size: 5px; color: #b0b0b0; }
.drop.dim { color: #777; }

.workspace { flex: 1; min-height: 0; display: flex; }
.docks { width: 157px; display: flex; flex-direction: column; padding-left: 1px; }
.dock-title { margin: 0; padding-right: 14px; font-size: 6px; font-weight: 400; line-height: 10px; text-align: center; }
.dock-title.lower { line-height: 16px; height: 13px; }
.dock-tools { display: flex; height: 18px; align-items: center; }
.dock-tools button { width: 15px; }
.dock-tools svg { width: 9px; height: 9px; }
.tree { flex: none; height: 203px; margin: 0; padding: 0; list-style: none; display: flex; flex-direction: column; background: #202020; border: 1px solid #4a4a4a; color: #dedede; }
.tree li { flex: 1; min-height: 0; display: flex; align-items: center; white-space: nowrap; overflow: hidden; }
.tree i { width: 11px; padding-left: 2px; font: 6px/8px "DejaVu Sans", sans-serif; color: #888; }
.tree svg { width: 8px; height: 8px; margin-right: 4px; color: #5485b9; }
.tree .pale { color: #b8cce0; }
.tree .child { padding-left: 10px; }
.layers-box { flex: 1; background: #202020; border: 1px solid #4a4a4a; }
.splitter { width: 4px; background: #323232; }
.central { flex: 1; display: flex; flex-direction: column; }
.central h1 { margin: 0; padding-left: 4px; font: bold 12px/20px "DejaVu Sans", sans-serif; color: #a8a8a8; }
.projects { flex: 1; background: #202020; border: 1px solid #4a4a4a; }
.edge { width: 4px; display: flex; align-items: center; justify-content: center; }
.edge span { width: 1px; height: 10px; background: #777; }

.status { flex: none; height: 19px; display: flex; align-items: center; gap: 3px; padding: 0 4px 0 2px; border-bottom: 1px solid #3f3f3f; font: 9px/12px "Liberation Sans", sans-serif; color: #999; }
.locator { width: 164px; height: 16px; margin-right: auto; display: flex; align-items: center; gap: 5px; padding-left: 4px; border: 1px solid #4a4a4a; background: #202020; }
.locator svg { width: 7px; height: 7px; color: #aaa; }
.locator input { flex: 1; }
.locator input::placeholder { color: #5e5e5e; opacity: 1; }
.field, .combo { height: 15px; border: 1px solid #494949; background: #202020; color: #bbb; }
.coord { width: 22px; }
.st-icon { width: 9px; height: 9px; margin: 0 1px; }
.combo { display: flex; width: 57px; margin-right: 2px; padding-left: 1px; }
.combo input { flex: 1; width: 10px; }
.combo > button, .steps { width: 12px; background: #484848; font: 5px/6px "DejaVu Sans", sans-serif; color: #aaa; }
.steps { display: flex; flex-direction: column; }
.steps button { flex: 1; }
.render { display: flex; align-items: center; gap: 4px; }
.render input { appearance: none; width: 11px; height: 11px; background: #107000; display: grid; place-items: center; }
.render input:checked::before { content: ""; width: 4px; height: 7px; border: solid #fff; border-width: 0 1px 1px 0; rotate: 40deg; }
.crs { margin: 0 11px 0 0; gap: 2px; }
.ball { width: 7px; height: 7px; border-radius: 50%; background: radial-gradient(circle at 60% 40%, #ccc, #777); }

.taskbar { flex: none; height: 25px; display: grid; grid-template-columns: 1fr auto 1fr; align-items: center; padding-bottom: 1px; background: #1f1f1f; color: #eee; }
.weather { justify-self: start; gap: 3px; padding-left: 10px; }
.warn { position: relative; }
.warn svg { width: 13px; height: 14px; }
.warn b { position: absolute; left: 6px; top: -3px; width: 8px; height: 8px; border-radius: 50%; background: #c93030; font-size: 6px; line-height: 8px; text-align: center; }
.warn-text { display: flex; flex-direction: column; align-items: flex-start; font: 6px/8px "Noto Sans CJK JP", sans-serif; }
.warn-text strong { font-weight: 500; }
.center { display: flex; align-items: center; }
.start { width: 26px; }
.start svg { width: 13px; height: 13px; }
.search { width: 116px; height: 16px; border-radius: 8px; background: #f0f0f0; color: #444; display: flex; align-items: center; gap: 5px; padding: 0 4px 0 6px; font-size: 7px; }
.search svg { width: 8px; height: 8px; }
.search input { flex: 1; width: 20px; }
.search input::placeholder { color: #666; opacity: 1; }
.search .palette { width: 24px; height: 12px; }
.apps { width: 423px; height: 22px; display: flex; }
.apps button { flex: 1; height: 22px; position: relative; border-radius: 3px; }
.apps svg { width: 13px; height: 13px; }
.apps .active { background: #333; }
.running::after { content: ""; position: absolute; bottom: 1px; width: 3px; height: 1px; background: #aaa; }
.active.running::after { width: 8px; }
.avatar { position: absolute; left: 12px; top: 2px; width: 8px; height: 8px; border-radius: 50%; background: radial-gradient(circle at 50% 50%, #6b4637 30%, #ddd 50%); }
.avatar.pink { background: radial-gradient(circle at 50% 50%, #8c5365 30%, #e8a5bd 50%); }
.ps { width: 11px; height: 11px; border-radius: 2px; background: #001e36; color: #31a8ff; font-weight: 700; line-height: 11px; }
.tray { display: flex; align-items: center; justify-content: flex-end; gap: 9px; padding-right: 10px; }
.tray svg { width: 8px; height: 8px; }
.tray .wide { width: 9px; height: 9px; }
.ime-a { font-size: 10px; width: 8px; }
.system { display: flex; gap: 5px; margin: 0 2px; }
.tray time { display: flex; flex-direction: column; align-items: flex-end; }

.menu { position: absolute; left: 70px; top: 24px; width: 168px; height: 395px; display: flex; flex-direction: column; padding: 3px 2px 2px; background: #303030; border: 1px solid #282828; border-top: 0; box-shadow: 2px 2px 3px #111; }
.menu button { flex: 1; min-height: 0; display: grid; grid-template-columns: 16px 91px 1fr 6px; align-items: center; text-align: left; color: #bcbcbc; }
.menu svg { width: 8px; height: 8px; grid-column: 1; margin-left: 2px; }
.menu button > span { grid-column: 2 / 4; grid-row: 1; }
.menu kbd { grid-column: 3; grid-row: 1; font: inherit; }
.menu em { grid-column: 4; font: 5px/8px "DejaVu Sans", sans-serif; }
.menu button:disabled { color: #5a5a5a; }
.menu button:disabled u { text-decoration-color: #484848; }
.menu .hot { background: #107000; }
.menu hr { flex: none; width: 154px; height: 1px; margin: 1px 0 0 5px; border: 0; background: #494949; }

.mark { position: absolute; border: 2px solid #e80b0b; pointer-events: none; }
.mark-menu { left: 64px; top: 4px; width: 32px; height: 26px; }
.mark-item { left: 67px; top: 90px; width: 120px; height: 23px; }
```
